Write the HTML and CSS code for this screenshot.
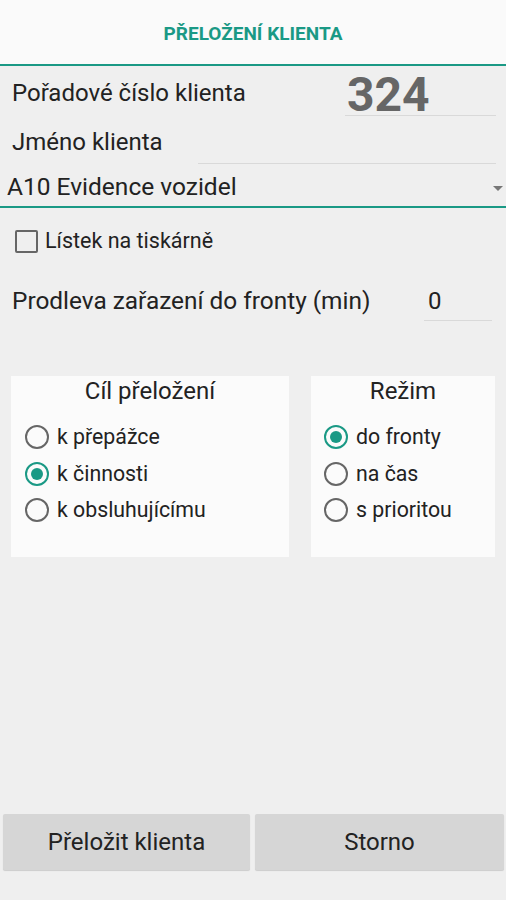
FILE: index.html
```html
<!DOCTYPE html>
<html lang="cs">
<head>
<meta charset="utf-8">
<title>Přeložení klienta</title>
<link rel="stylesheet" href="styles.css">
</head>
<body>
<div class="page">
  <header class="header">
    <h1 class="title">PŘELOŽENÍ KLIENTA</h1>
  </header>

  <div class="row row-number">
    <span class="label label-number">Pořadové číslo klienta</span>
    <div class="field field-number">324</div>
  </div>

  <div class="row row-name">
    <span class="label label-name">Jméno klienta</span>
    <div class="field field-name"></div>
  </div>

  <div class="spinner">
    <span class="spinner-text">A10 Evidence vozidel</span>
    <span class="spinner-arrow"></span>
  </div>

  <div class="check-row">
    <span class="checkbox"></span>
    <span class="check-label">Lístek na tiskárně</span>
  </div>

  <div class="row row-delay">
    <span class="label label-delay">Prodleva zařazení do fronty (min)</span>
    <div class="field field-delay">0</div>
  </div>

  <div class="cards">
    <section class="card card-target">
      <h2 class="card-title">Cíl přeložení</h2>
      <ul class="radios">
        <li class="radio-item"><span class="radio"></span><span class="radio-label">k přepážce</span></li>
        <li class="radio-item"><span class="radio checked"></span><span class="radio-label">k činnosti</span></li>
        <li class="radio-item"><span class="radio"></span><span class="radio-label">k obsluhujícímu</span></li>
      </ul>
    </section>
    <section class="card card-mode">
      <h2 class="card-title">Režim</h2>
      <ul class="radios">
        <li class="radio-item"><span class="radio checked"></span><span class="radio-label">do fronty</span></li>
        <li class="radio-item"><span class="radio"></span><span class="radio-label">na čas</span></li>
        <li class="radio-item"><span class="radio"></span><span class="radio-label">s prioritou</span></li>
      </ul>
    </section>
  </div>

  <footer class="buttons">
    <button class="btn btn-left">Přeložit klienta</button>
    <button class="btn btn-right">Storno</button>
  </footer>
</div>
</body>
</html>
```

FILE: styles.css
```css
* {
  box-sizing: border-box;
}

html, body {
  margin: 0;
  padding: 0;
}

body {
  background: #efefef;
  font-family: Roboto, "Noto Sans", "Liberation Sans", sans-serif;
  color: #222222;
}

.page {
  display: flex;
  flex-direction: column;
  height: 900px;
}

.header {
  height: 66px;
  background: #fafafa;
  border-bottom: 2px solid #1a9985;
  display: flex;
  justify-content: center;
}

.title {
  margin: 24px 0 0 0;
  font-size: 19px;
  line-height: 20px;
  font-weight: 700;
  color: #1a9985;
}

.row {
  display: flex;
  align-items: flex-start;
}

.label {
  color: #222222;
  padding-left: 12px;
}

.label-number {
  margin-top: 13px;
  font-size: 24px;
  line-height: 28px;
}

.field {
  border-bottom: 1px solid #d9d9d9;
}

.field-number {
  margin-left: auto;
  margin-right: 10px;
  width: 151px;
  padding-top: 9px;
  padding-left: 2px;
  font-size: 48px;
  line-height: 40px;
  font-weight: 700;
  color: #666666;
  height: 50px;
}

.label-name {
  margin-top: 12px;
  font-size: 24px;
  line-height: 28px;
}

.field-name {
  margin-left: auto;
  margin-right: 10px;
  width: 298px;
  height: 48px;
}

.spinner {
  height: 44px;
  border-bottom: 2px solid #1a9985;
  display: flex;
  align-items: flex-start;
  padding-left: 7px;
  padding-right: 3px;
}

.spinner-text {
  margin-top: 9px;
  font-size: 24.5px;
  line-height: 28px;
  color: #222222;
}

.spinner-arrow {
  margin-left: auto;
  margin-top: 22px;
  width: 0;
  height: 0;
  border-left: 5px solid transparent;
  border-right: 5px solid transparent;
  border-top: 5px solid #777777;
}

.check-row {
  display: flex;
  align-items: center;
  padding-top: 20px;
  padding-left: 15px;
}

.checkbox {
  width: 23px;
  height: 23px;
  border: 2px solid #666666;
  border-radius: 2px;
  flex: none;
}

.check-label {
  margin-left: 7px;
  font-size: 21.5px;
  line-height: 26px;
  color: #222222;
}

.row-delay {
  margin-top: 26px;
}

.label-delay {
  margin-top: 7px;
  font-size: 24.4px;
  line-height: 28px;
}

.field-delay {
  margin-left: auto;
  margin-right: 14px;
  width: 68px;
  height: 41px;
  padding-top: 7px;
  padding-left: 4px;
  font-size: 24px;
  line-height: 28px;
  color: #222222;
}

.cards {
  display: flex;
  gap: 22px;
  padding-left: 11px;
  margin-top: 55px;
}

.card {
  background: #fbfbfb;
  height: 181px;
  padding-top: 1px;
}

.card-target {
  width: 278px;
  padding-left: 14px;
}

.card-mode {
  width: 184px;
  padding-left: 13px;
}

.card-title {
  margin: 0;
  font-size: 24px;
  line-height: 28px;
  font-weight: 400;
  text-align: center;
  color: #222222;
  padding-right: 14px;
}

.card-mode .card-title {
  padding-right: 13px;
}

.radios {
  list-style: none;
  margin: 14px 0 0 0;
  padding: 0;
}

.radio-item {
  height: 36.5px;
  display: flex;
  align-items: center;
}

.radio {
  width: 24px;
  height: 24px;
  border: 2px solid #666666;
  border-radius: 50%;
  flex: none;
  display: flex;
  align-items: center;
  justify-content: center;
}

.radio.checked {
  border-color: #1a9985;
}

.radio.checked::after {
  content: "";
  width: 12px;
  height: 12px;
  border-radius: 50%;
  background: #1a9985;
}

.radio-label {
  margin-left: 8px;
  font-size: 21.3px;
  line-height: 26px;
  color: #222222;
}

.buttons {
  margin-top: auto;
  margin-bottom: 30px;
  display: flex;
  gap: 5px;
  padding: 0 2px 0 3px;
}

.btn {
  height: 56px;
  border: none;
  border-radius: 2px;
  background: #d6d6d6;
  box-shadow: 0 1px 1px rgba(0, 0, 0, 0.15);
  font-family: Roboto, "Noto Sans", "Liberation Sans", sans-serif;
  font-size: 24px;
  color: #222222;
  padding: 0;
}

.btn-left {
  width: 247px;
}

.btn-right {
  width: 249px;
}
```
